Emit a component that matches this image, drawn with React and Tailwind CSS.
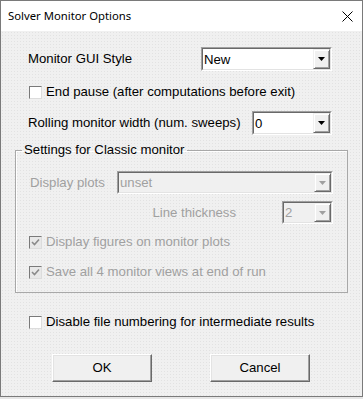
import React from 'react';

const Arrow = ({ disabled }) => (
  <svg width="7" height="4" viewBox="0 0 7 4">
    <path d="M0 0h7L3.5 4z" fill={disabled ? '#a0a0a0' : '#000'} />
  </svg>
);

const Combo = ({ value, className, disabled }) => (
  <div className={`flex border border-t-[#a0a0a0] border-l-[#a0a0a0] border-b-white border-r-white ${className}`}>
    <div
      className={`flex flex-1 border border-t-[#696969] border-l-[#696969] border-b-[#e3e3e3] border-r-[#e3e3e3] ${
        disabled ? 'bg-[#f0f0f0] text-[#a0a0a0]' : 'bg-white text-black'
      }`}
    >
      <span className="flex-1 pl-[1px] self-center leading-[15px]">{value}</span>
      <div className="w-[17px] flex items-center justify-center bg-[#f0f0f0] border border-t-[#f0f0f0] border-l-[#f0f0f0] border-b-[#696969] border-r-[#696969] shadow-[inset_1px_1px_0_#fff,inset_-1px_-1px_0_#a0a0a0]">
        <Arrow disabled={disabled} />
      </div>
    </div>
  </div>
);

const Check = ({ checked, disabled }) => (
  <div
    className={`w-[13px] h-[13px] flex items-center justify-center border border-t-[#7a7a7a] border-l-[#7a7a7a] border-b-[#dcdcdc] border-r-[#dcdcdc] ${
      disabled ? 'bg-[#e8e8e8]' : 'bg-white'
    }`}
  >
    {checked && (
      <svg width="9" height="9" viewBox="0 0 9 9">
        <path d="M1 4l2.5 2.5L8 1.5" stroke={disabled ? '#8a8a8a' : '#000'} strokeWidth="1.6" fill="none" />
      </svg>
    )}
  </div>
);

const CheckRow = ({ label, checked, disabled, className }) => (
  <div className={`flex items-center h-[16px] ${className}`}>
    <Check checked={checked} disabled={disabled} />
    <span className={`ml-[4px] leading-[16px] ${disabled ? 'text-[#a0a0a0]' : 'text-black'}`}>{label}</span>
  </div>
);

const Button = ({ children, className }) => (
  <button
    className={`h-[28px] w-[100px] bg-[#f0f0f0] text-black border border-t-white border-l-white border-b-[#696969] border-r-[#696969] shadow-[inset_-1px_-1px_0_#a0a0a0,inset_1px_1px_0_#e3e3e3] ${className}`}
  >
    {children}
  </button>
);

export default function App() {
  return (
    <div className="w-[363px] h-[399px] bg-[#e6e6e6] overflow-hidden">
      <div className="w-[363px] h-[397px] border border-[#7a7a7a] bg-[#f0f0f0] flex flex-col font-['Liberation_Sans',Arial,sans-serif] text-[13.2px]">
        {/* title bar */}
        <div className="h-[30px] bg-white flex items-center justify-between pl-[7px] pr-[9px] font-['Noto_Sans',sans-serif] text-[11.3px] text-black">
          <span>Solver Monitor Options</span>
          <svg width="11" height="11" viewBox="0 0 11 11">
            <path d="M0.5 0.5l10 10M10.5 0.5l-10 10" stroke="#000" strokeWidth="1" />
          </svg>
        </div>

        {/* body, faint dotted texture like the original */}
        <div className="flex flex-col flex-1 bg-[radial-gradient(circle,#e2e2e2_0.7px,transparent_0.8px)] bg-[length:3px_3px]">
          <div className="flex items-center h-[24px] mt-[16px] pl-[27px]">
            <span className="w-[173px]">Monitor GUI Style</span>
            <Combo value="New" className="w-[131px] h-[24px]" />
          </div>

          <CheckRow label="End pause (after computations before exit)" className="mt-[13px] pl-[28px]" />

          <div className="flex items-center h-[24px] mt-[11px] pl-[27px]">
            <span className="w-[224px]">Rolling monitor width (num. sweeps)</span>
            <Combo value="0" className="w-[80px] h-[24px]" />
          </div>

          <fieldset className="mt-[7px] ml-[14px] w-[333px] border border-[#a8a8a8] shadow-[inset_1px_1px_0_#fff] pb-[12px]">
            <legend className="ml-[6px] px-[2px] leading-[16px] text-black">Settings for Classic monitor</legend>
            <div className="flex items-center h-[23px] mt-[13px] pl-[14px]">
              <span className="w-[87px] text-[#a0a0a0]">Display plots</span>
              <Combo value="unset" disabled className="w-[216px] h-[23px]" />
            </div>
            <div className="flex items-center justify-end h-[23px] mt-[7px] pr-[14px]">
              <span className="mr-[46px] text-[#a0a0a0]">Line thickness</span>
              <Combo value="2" disabled className="w-[51px] h-[23px]" />
            </div>
            <CheckRow label="Display figures on monitor plots" checked disabled className="mt-[10px] pl-[13px]" />
            <CheckRow label="Save all 4 monitor views at end of run" checked disabled className="mt-[14px] pl-[13px]" />
          </fieldset>

          <CheckRow label="Disable file numbering for intermediate results" className="mt-[21px] pl-[28px]" />

          <div className="flex mt-[24px] pl-[51px] gap-[58px]">
            <Button>OK</Button>
            <Button>Cancel</Button>
          </div>
        </div>
      </div>
    </div>
  );
}
